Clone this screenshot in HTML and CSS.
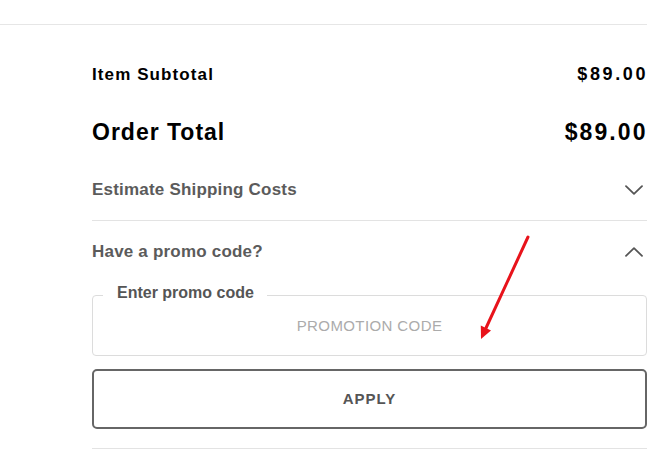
FILE: index.html
```html
<!DOCTYPE html>
<html lang="en">
<head>
<meta charset="utf-8">
<title>Order summary</title>
<link rel="stylesheet" href="styles.css">
</head>
<body>
<div class="page">
  <div class="topbar"></div>
  <div class="content">
    <div class="totals">
      <div class="row row-sub">
        <span class="label">Item Subtotal</span>
        <span class="amount">$89.00</span>
      </div>
      <div class="row row-total">
        <span class="label">Order Total</span>
        <span class="amount">$89.00</span>
      </div>
    </div>
    <div class="acc-item">
      <div class="acc-head">
        <span>Estimate Shipping Costs</span>
        <svg class="chev" width="18" height="10" viewBox="0 0 18 10"><polyline points="1,1.2 9,8.8 17,1.2"/></svg>
      </div>
    </div>
    <div class="acc-item">
      <div class="acc-head">
        <span>Have a promo code?</span>
        <svg class="chev" width="18" height="10" viewBox="0 0 18 10"><polyline points="1,8.8 9,1.2 17,8.8"/></svg>
      </div>
      <div class="acc-body">
        <fieldset class="promo">
          <legend>Enter promo code</legend>
          <input class="promo-input" type="text" placeholder="PROMOTION CODE">
        </fieldset>
        <button class="apply" type="button">APPLY</button>
      </div>
    </div>
  </div>
  <svg class="annot" width="663" height="464" viewBox="0 0 663 464">
    <line x1="528" y1="237" x2="486" y2="328" stroke="#e8131b" stroke-width="3" stroke-linecap="round"/>
    <polygon points="481,339 480.8,325.6 491,330.4" fill="#e8131b"/>
  </svg>
</div>
</body>
</html>
```

FILE: styles.css
```css
html, body {
  margin: 0;
  padding: 0;
  background: #fff;
}

body {
  font-family: "Liberation Sans", Arial, sans-serif;
  color: #000;
}

.page {
  position: relative;
  width: 663px;
  height: 464px;
}

.topbar {
  height: 24px;
  margin-right: 16px;
  border-bottom: 1px solid #e6e6e6;
}

.content {
  padding: 0 16px 0 92px;
}

.totals {
  padding-top: 39px;
  padding-bottom: 13px;
}

.row {
  display: flex;
  justify-content: space-between;
  align-items: baseline;
  font-weight: 700;
  color: #000;
}

.row-sub {
  font-size: 17px;
  line-height: 20px;
}

.row-sub .label {
  letter-spacing: 1.1px;
}

.row-sub .amount {
  font-size: 18px;
  letter-spacing: 2.6px;
  margin-right: -1px;
}

.row-total {
  margin-top: 33px;
  font-size: 23px;
  line-height: 28px;
}

.row-total .label {
  letter-spacing: 1px;
}

.row-total .amount {
  letter-spacing: 2.1px;
  margin-right: -0.6px;
}

.acc-item {
  border-bottom: 1px solid #e3e3e3;
}

.acc-head {
  display: flex;
  justify-content: space-between;
  align-items: center;
  padding: 21px 0 20px;
  font-size: 17px;
  line-height: 20px;
  font-weight: 700;
  letter-spacing: 0.2px;
  color: #5b5b5b;
}

.acc-item + .acc-item .acc-head {
  padding-bottom: 21px;
}

.chev {
  margin-right: 4px;
  fill: none;
  stroke: #555;
  stroke-width: 1.8;
  stroke-linecap: round;
  stroke-linejoin: round;
}

.acc-body {
  padding-bottom: 19px;
}

.promo {
  margin: 0;
  padding: 0;
  min-width: 0;
  border: 1px solid #dcdcdc;
  border-radius: 4px;
}

.promo legend {
  margin-left: 10px;
  padding: 0 13px 5px 14px;
  font-size: 16px;
  line-height: 20px;
  font-weight: 700;
  color: #555;
}

.promo-input {
  display: block;
  box-sizing: border-box;
  width: 100%;
  height: 47px;
  padding: 7px 0 20px;
  border: 0;
  background: transparent;
  outline: none;
  font-family: "Liberation Sans", Arial, sans-serif;
  font-size: 15px;
  line-height: 20px;
  letter-spacing: 0.4px;
  text-align: center;
  color: #333;
}

.promo-input::placeholder {
  color: #ababab;
}

.apply {
  display: block;
  box-sizing: border-box;
  width: 100%;
  height: 60px;
  margin-top: 13px;
  padding: 0 0 2px;
  border: 2px solid #666;
  border-radius: 5px;
  background: #fff;
  font-family: "Liberation Sans", Arial, sans-serif;
  font-size: 15px;
  font-weight: 700;
  letter-spacing: 1px;
  color: #555;
  cursor: pointer;
}

.annot {
  position: absolute;
  left: 0;
  top: 0;
  pointer-events: none;
}
```
